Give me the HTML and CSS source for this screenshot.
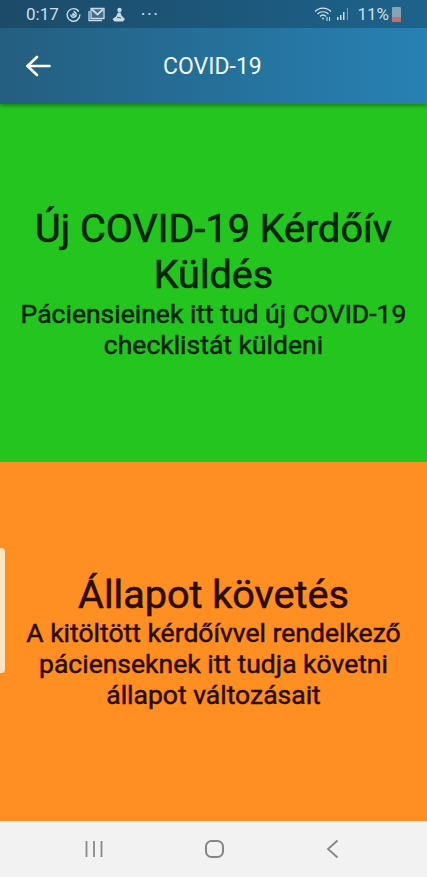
FILE: index.html
```html
<!DOCTYPE html>
<html lang="hu">
  <head>
    <meta charset="UTF-8" />
    <title>COVID-19</title>
    <link rel="stylesheet" href="styles.css">
  </head>
  <body>
    <div class="screen">
      <div class="top-wrapper">
        <div class="status-bar">
          <div class="status-left">
            <span class="clock">0:17</span>
            <svg class="status-icon" width="15" height="15" viewBox="0 0 15 15" fill="none" stroke="#c9dbe6" stroke-width="1.4">
              <path d="M12.8 4.500A6.300 6.300 0 1 0 13.800 7.500" />
              <path d="M4.800 7.500a2.700 2.700 0 1 0 2.700-2.700" />
              <circle cx="7.500" cy="7.500" r="0.8" fill="#c9dbe6" />
            </svg>
            <svg class="status-icon" width="17" height="15" viewBox="0 0 17 15" fill="none" stroke="#c9dbe6">
              <path d="M3 1.500h13v10H3z" stroke-width="1.300" fill="#3d6e8a" />
              <path d="M4 2.500l5.500 5 5.500-5" stroke-width="2" />
              <path d="M1 4v9.500h13" stroke-width="1.300" />
            </svg>
            <svg class="status-icon" width="14" height="15" viewBox="0 0 14 15" fill="#c9dbe6">
              <circle cx="7.500" cy="3" r="2.200" />
              <path d="M6 5.500h2.500l1 3 3.500 3.500-2 2.500H2.500L0.500 12 4 9.500z" />
              <path d="M5 9.800l4 0.800v1l-4-0.800z" fill="#2a5b78" />
            </svg>
            <span class="more-dots">···</span>
          </div>
          <div class="status-right">
            <svg width="19" height="16" viewBox="0 0 19 16" fill="none" stroke="#d5e3ec" stroke-width="1.2">
              <path d="M1 5.500c4.500-4.500 11.500-4.500 16 0" />
              <path d="M3.500 8c3-3 8-3 11 0" />
              <path d="M6 10.500c1.800-1.800 4.200-1.800 6 0" />
              <circle cx="9" cy="12.500" r="0.9" fill="#d5e3ec" stroke="none" />
              <path d="M13 11v4M15.500 15v-4" stroke-width="1" />
            </svg>
            <svg width="14" height="14" viewBox="0 0 14 14" fill="#c9dbe6">
              <path d="M1 10h1.500v3H1zM4 8h1.500v5H4zM7 5h1.500v8H7z" />
              <path d="M11 1h1v12h-1z" fill="#7f9eb2" />
            </svg>
            <span class="battery-pct">11%</span>
            <div class="battery"><div class="battery-level"></div></div>
          </div>
        </div>
        <header class="app-bar">
          <svg class="back-arrow" width="26" height="22" viewBox="0 0 26 22" fill="none" stroke="#fff" stroke-width="2.6" stroke-linecap="round" stroke-linejoin="round">
            <path d="M2.500 11h22" />
            <path d="M12 2l-9.500 9 9.500 9" />
          </svg>
          <h1 class="app-title">COVID-19</h1>
        </header>
      </div>

      <section class="tile tile-green">
        <h2>Új COVID-19 Kérdőív Küldés</h2>
        <p>Páciensieinek itt tud új COVID-19 checklistát küldeni</p>
      </section>
      <section class="tile tile-orange">
        <div class="edge-handle"></div>
        <h2>Állapot követés</h2>
        <p>A kitöltött kérdőívvel rendelkező pácienseknek itt tudja követni állapot változásait</p>
      </section>

      <nav class="nav-bar">
        <svg width="20" height="18" viewBox="0 0 20 18" fill="none" stroke="#8a8a8a" stroke-width="1.800">
          <path d="M2.500 1v16M10 1v16M17.500 1v16" />
        </svg>
        <svg width="20" height="20" viewBox="0 0 20 20" fill="none" stroke="#858585" stroke-width="2">
          <rect x="1" y="2" width="17" height="16" rx="5.500" />
        </svg>
        <svg width="14" height="20" viewBox="0 0 14 20" fill="none" stroke="#858585" stroke-width="1.800">
          <path d="M12.500 1.500L3 10l9.500 8.500" />
        </svg>
      </nav>
    </div>
  </body>
</html>
```

FILE: styles.css
```css
html,
body {
  height: 100%;
  margin: 0;
}
body {
  font-family: Roboto, "Liberation Sans", sans-serif;
}

.screen {
  display: flex;
  flex-direction: column;
  height: 877px;
  overflow: hidden;
}

.top-wrapper {
  height: 104px;
  background: linear-gradient(90deg, #245e80 0%, #2781b3 100%);
  box-shadow: 0 2px 4px rgba(0, 0, 0, 0.35);
  position: relative;
  z-index: 2;
}

.status-bar {
  height: 28px;
  padding: 0 26px;
  display: flex;
  justify-content: space-between;
  align-items: center;
  background-color: rgba(10, 30, 50, 0.3);
  color: #cfdfe9;
  font-size: 17px;
}
.status-left,
.status-right {
  display: flex;
  align-items: center;
}
.status-left {
  gap: 7px;
}
.status-icon {
  display: block;
}
.more-dots {
  margin-left: 8px;
  font-size: 18px;
  letter-spacing: 1.500px;
}
.status-right {
  gap: 3px;
}
.battery-pct {
  margin-left: 4px;
  font-size: 17px;
}
.battery {
  width: 9px;
  height: 15px;
  background-color: #8aa3b3;
  border-radius: 1px;
  display: flex;
  align-items: flex-end;
}
.battery-level {
  width: 100%;
  height: 5px;
  background-color: #c2706f;
}

.app-bar {
  height: 76px;
  padding-left: 25px;
  display: flex;
  align-items: center;
}
.app-title {
  margin: 0 0 0 112px;
  color: #f2f8fb;
  font-size: 23px;
  font-weight: 400;
}

.tile {
  display: flex;
  flex-direction: column;
  justify-content: center;
  align-items: center;
  text-align: center;
  position: relative;
}
.tile h2 {
  margin: 0;
  font-size: 39.600px;
  line-height: 46px;
  font-weight: 400;
  -webkit-text-stroke: 0.6px currentColor;
}
.tile p {
  margin: 0;
  font-size: 26.500px;
  line-height: 31px;
  font-weight: 400;
  -webkit-text-stroke: 0.5px currentColor;
}

.tile-green {
  height: 358px;
  padding: 0 16px;
  box-sizing: border-box;
  background-color: #25c520;
  color: #062409;
}
.tile-orange {
  height: 359px;
  padding: 0 16px;
  box-sizing: border-box;
  background-color: #ff8f22;
  color: #2c0d05;
}
.tile-orange h2 {
  line-height: 44px;
}

.edge-handle {
  position: absolute;
  left: 0;
  top: 86px;
  width: 5px;
  height: 125px;
  background-color: #fde3c4;
  border-radius: 0 4px 4px 0;
}

.nav-bar {
  flex: 1;
  padding: 0 88px 0 84px;
  display: flex;
  justify-content: space-between;
  align-items: center;
  background-color: #f2f2f2;
}
```
